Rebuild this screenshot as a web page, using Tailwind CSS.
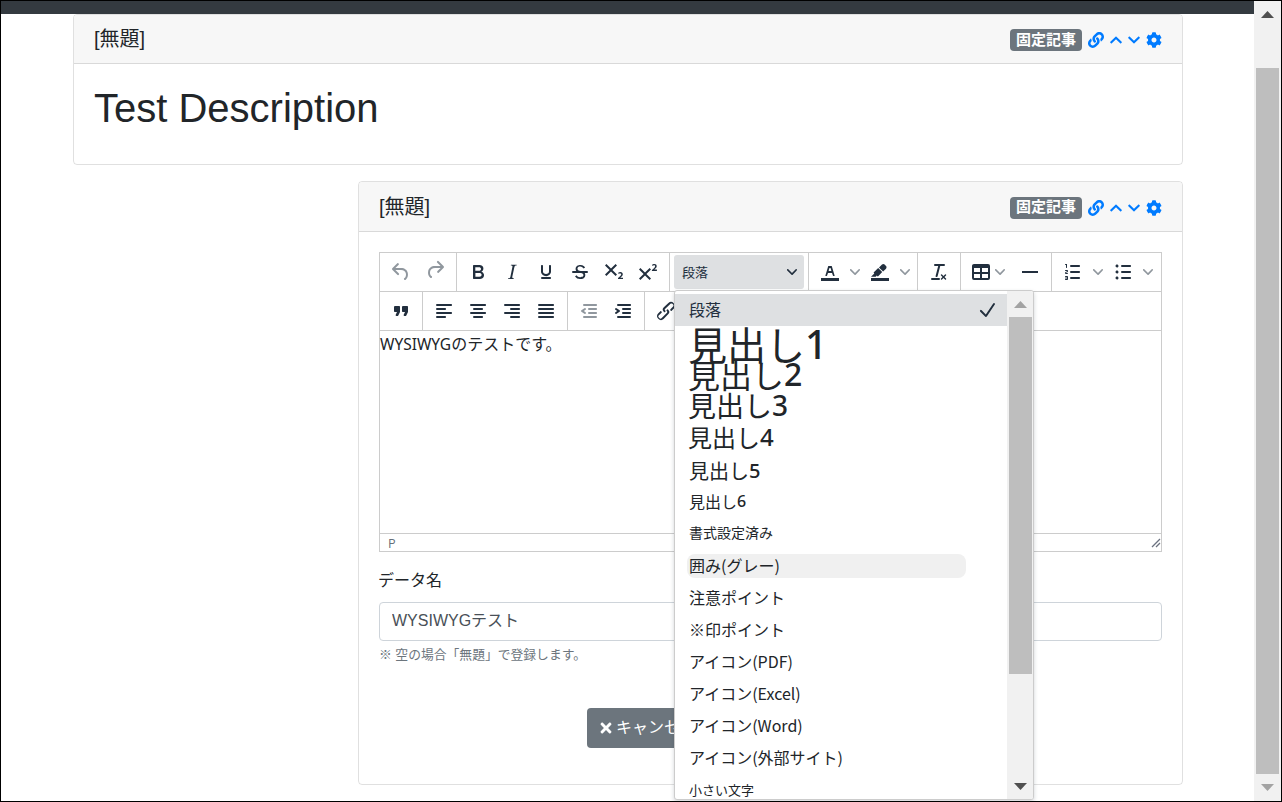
<!DOCTYPE html>
<html lang="ja">
<head>
<meta charset="utf-8">
<title>WYSIWYG</title>
<script src="https://cdn.jsdelivr.net/npm/@tailwindcss/browser@4"></script>
</head>
<body class="bg-white">
<div class="w-[1282px] h-[802px] border border-black overflow-hidden flex bg-white text-[#212529] font-['Liberation_Sans','Noto_Sans_CJK_JP',sans-serif]">
  <div class="flex-1 min-w-0">
    <div class="h-[13px] bg-[#343a40]"></div>

    <section class="ml-[72px] w-[1110px] h-[151px] border border-black/12 rounded-[4px] overflow-hidden mb-[16px]">
      <header class="h-[49px] bg-[#f7f7f7] border-b border-black/12 px-[20px] flex items-center justify-between">
        <span class="text-[20px] leading-[24px]">[無題]</span>
        <div class="flex items-center gap-[6px] text-[#007bff] mt-[2px]">
          <span class="h-[22px] w-[72px] rounded-[4px] bg-[#6c757d] text-white text-[15px] font-bold flex items-center justify-center">固定記事</span>
          <svg class="w-[16px] h-[16px] fill-current" viewBox="0 0 512 512"><path d="M326.612 185.391c59.747 59.809 58.927 155.698.36 214.59-.11.12-.24.25-.36.37l-67.2 67.2c-59.27 59.27-155.699 59.262-214.96 0-59.27-59.26-59.27-155.7 0-214.96l37.106-37.106c9.84-9.84 26.786-3.3 27.294 10.606.648 17.722 3.826 35.527 9.69 52.721 1.986 5.822.567 12.262-3.783 16.612l-13.087 13.087c-28.026 28.026-28.905 73.66-1.155 101.96 28.024 28.579 74.086 28.749 102.325.51l67.2-67.19c28.191-28.191 28.073-73.757 0-101.83-3.701-3.694-7.429-6.564-10.341-8.569a16.037 16.037 0 0 1-6.947-12.606c-.396-10.567 3.348-21.456 11.698-29.806l21.054-21.055c5.521-5.521 14.182-6.199 20.584-1.731a152.482 152.482 0 0 1 20.522 17.197zM467.547 44.449c-59.261-59.262-155.69-59.27-214.96 0l-67.2 67.2c-.12.12-.25.25-.36.37-58.566 58.892-59.387 154.781.36 214.59a152.454 152.454 0 0 0 20.521 17.196c6.402 4.468 15.064 3.789 20.584-1.731l21.054-21.055c8.35-8.35 12.094-19.239 11.698-29.806a16.037 16.037 0 0 0-6.947-12.606c-2.912-2.005-6.64-4.875-10.341-8.569-28.073-28.073-28.191-73.639 0-101.83l67.2-67.19c28.239-28.239 74.3-28.069 102.325.51 27.75 28.3 26.872 73.934-1.155 101.96l-13.087 13.087c-4.35 4.35-5.769 10.79-3.783 16.612 5.864 17.194 9.042 34.999 9.69 52.721.509 13.906 17.454 20.446 27.294 10.606l37.106-37.106c59.271-59.259 59.271-155.699.001-214.959z"/></svg>
          <svg class="w-[12px] h-[16px] fill-current" viewBox="0 0 448 512"><path d="M240.971 130.524l194.343 194.343c9.373 9.373 9.373 24.569 0 33.941l-22.667 22.667c-9.357 9.357-24.522 9.375-33.901.04L224 227.495 69.255 381.516c-9.379 9.335-24.544 9.317-33.901-.04l-22.667-22.667c-9.373-9.373-9.373-24.569 0-33.941L207.03 130.525c9.372-9.373 24.568-9.373 33.941-.001z"/></svg>
          <svg class="w-[12px] h-[16px] fill-current" viewBox="0 0 448 512"><path d="M207.029 381.476L12.686 187.132c-9.373-9.373-9.373-24.569 0-33.941l22.667-22.667c9.357-9.357 24.522-9.375 33.901-.04L224 284.505l154.745-154.021c9.379-9.335 24.544-9.317 33.901.04l22.667 22.667c9.373 9.373 9.373 24.569 0 33.941L240.971 381.476c-9.373 9.372-24.569 9.372-33.942 0z"/></svg>
          <svg class="w-[16px] h-[16px] fill-current" viewBox="0 0 512 512"><path d="M487.4 315.7l-42.6-24.6c4.3-23.2 4.3-47 0-70.2l42.6-24.6c4.9-2.8 7.1-8.6 5.5-14-11.1-35.6-30-67.8-54.7-94.6-3.8-4.1-10-5.1-14.8-2.3L380.8 110c-17.9-15.4-38.5-27.3-60.8-35.1V25.8c0-5.6-3.9-10.5-9.4-11.7-36.7-8.2-74.3-7.8-109.2 0-5.5 1.2-9.4 6.1-9.4 11.7V75c-22.2 7.9-42.8 19.8-60.8 35.1L88.7 85.5c-4.9-2.8-11-1.9-14.8 2.3-24.7 26.7-43.6 58.9-54.7 94.6-1.7 5.4.6 11.2 5.5 14L67.3 221c-4.3 23.2-4.3 47 0 70.2l-42.6 24.6c-4.9 2.8-7.1 8.6-5.5 14 11.1 35.6 30 67.8 54.7 94.6 3.8 4.1 10 5.1 14.8 2.3l42.6-24.6c17.9 15.4 38.5 27.3 60.8 35.1v49.2c0 5.6 3.9 10.5 9.4 11.7 36.7 8.2 74.3 7.8 109.2 0 5.5-1.2 9.4-6.1 9.4-11.7v-49.2c22.2-7.9 42.8-19.8 60.8-35.1l42.6 24.6c4.9 2.8 11 1.9 14.8-2.3 24.7-26.7 43.6-58.9 54.7-94.6 1.5-5.5-.7-11.3-5.6-14.1zM256 336c-44.1 0-80-35.9-80-80s35.9-80 80-80 80 35.9 80 80-35.9 80-80 80z"/></svg>
        </div>
      </header>
      <div class="px-[20px] pt-[20px]"><h1 class="text-[40px] leading-[48px] font-normal">Test Description</h1></div>
    </section>

    <section class="ml-[357px] w-[825px] h-[604px] border border-black/12 rounded-[4px]">
      <header class="h-[50px] bg-[#f7f7f7] border-b border-black/12 rounded-t-[4px] px-[20px] flex items-center justify-between">
        <span class="text-[20px] leading-[24px]">[無題]</span>
        <div class="flex items-center gap-[6px] text-[#007bff] mt-[2px]">
          <span class="h-[22px] w-[72px] rounded-[4px] bg-[#6c757d] text-white text-[15px] font-bold flex items-center justify-center">固定記事</span>
          <svg class="w-[16px] h-[16px] fill-current" viewBox="0 0 512 512"><path d="M326.612 185.391c59.747 59.809 58.927 155.698.36 214.59-.11.12-.24.25-.36.37l-67.2 67.2c-59.27 59.27-155.699 59.262-214.96 0-59.27-59.26-59.27-155.7 0-214.96l37.106-37.106c9.84-9.84 26.786-3.3 27.294 10.606.648 17.722 3.826 35.527 9.69 52.721 1.986 5.822.567 12.262-3.783 16.612l-13.087 13.087c-28.026 28.026-28.905 73.66-1.155 101.96 28.024 28.579 74.086 28.749 102.325.51l67.2-67.19c28.191-28.191 28.073-73.757 0-101.83-3.701-3.694-7.429-6.564-10.341-8.569a16.037 16.037 0 0 1-6.947-12.606c-.396-10.567 3.348-21.456 11.698-29.806l21.054-21.055c5.521-5.521 14.182-6.199 20.584-1.731a152.482 152.482 0 0 1 20.522 17.197zM467.547 44.449c-59.261-59.262-155.69-59.27-214.96 0l-67.2 67.2c-.12.12-.25.25-.36.37-58.566 58.892-59.387 154.781.36 214.59a152.454 152.454 0 0 0 20.521 17.196c6.402 4.468 15.064 3.789 20.584-1.731l21.054-21.055c8.35-8.35 12.094-19.239 11.698-29.806a16.037 16.037 0 0 0-6.947-12.606c-2.912-2.005-6.64-4.875-10.341-8.569-28.073-28.073-28.191-73.639 0-101.83l67.2-67.19c28.239-28.239 74.3-28.069 102.325.51 27.75 28.3 26.872 73.934-1.155 101.96l-13.087 13.087c-4.35 4.35-5.769 10.79-3.783 16.612 5.864 17.194 9.042 34.999 9.69 52.721.509 13.906 17.454 20.446 27.294 10.606l37.106-37.106c59.271-59.259 59.271-155.699.001-214.959z"/></svg>
          <svg class="w-[12px] h-[16px] fill-current" viewBox="0 0 448 512"><path d="M240.971 130.524l194.343 194.343c9.373 9.373 9.373 24.569 0 33.941l-22.667 22.667c-9.357 9.357-24.522 9.375-33.901.04L224 227.495 69.255 381.516c-9.379 9.335-24.544 9.317-33.901-.04l-22.667-22.667c-9.373-9.373-9.373-24.569 0-33.941L207.03 130.525c9.372-9.373 24.568-9.373 33.941-.001z"/></svg>
          <svg class="w-[12px] h-[16px] fill-current" viewBox="0 0 448 512"><path d="M207.029 381.476L12.686 187.132c-9.373-9.373-9.373-24.569 0-33.941l22.667-22.667c9.357-9.357 24.522-9.375 33.901-.04L224 284.505l154.745-154.021c9.379-9.335 24.544-9.317 33.901.04l22.667 22.667c9.373 9.373 9.373 24.569 0 33.941L240.971 381.476c-9.373 9.372-24.569 9.372-33.942 0z"/></svg>
          <svg class="w-[16px] h-[16px] fill-current" viewBox="0 0 512 512"><path d="M487.4 315.7l-42.6-24.6c4.3-23.2 4.3-47 0-70.2l42.6-24.6c4.9-2.8 7.1-8.6 5.5-14-11.1-35.6-30-67.8-54.7-94.6-3.8-4.1-10-5.1-14.8-2.3L380.8 110c-17.9-15.4-38.5-27.3-60.8-35.1V25.8c0-5.6-3.9-10.5-9.4-11.7-36.7-8.2-74.3-7.8-109.2 0-5.5 1.2-9.4 6.1-9.4 11.7V75c-22.2 7.9-42.8 19.8-60.8 35.1L88.7 85.5c-4.9-2.8-11-1.9-14.8 2.3-24.7 26.7-43.6 58.9-54.7 94.6-1.7 5.4.6 11.2 5.5 14L67.3 221c-4.3 23.2-4.3 47 0 70.2l-42.6 24.6c-4.9 2.8-7.1 8.6-5.5 14 11.1 35.6 30 67.8 54.7 94.6 3.8 4.1 10 5.1 14.8 2.3l42.6-24.6c17.9 15.4 38.5 27.3 60.8 35.1v49.2c0 5.6 3.9 10.5 9.4 11.7 36.7 8.2 74.3 7.8 109.2 0 5.5-1.2 9.4-6.1 9.4-11.7v-49.2c22.2-7.9 42.8-19.8 60.8-35.1l42.6 24.6c4.9 2.8 11 1.9 14.8-2.3 24.7-26.7 43.6-58.9 54.7-94.6 1.5-5.5-.7-11.3-5.6-14.1zM256 336c-44.1 0-80-35.9-80-80s35.9-80 80-80 80 35.9 80 80-35.9 80-80 80z"/></svg>
        </div>
      </header>

      <div class="px-[20px] pt-[20px]">
        <div class="relative h-[300px] border border-[#ccc] flex flex-col">
          <!-- row 1 -->
          <div class="h-[39px] border-b border-[#ccc] flex shrink-0 text-[#222f3e]">
            <div class="flex items-center px-[4px] border-r border-[#ccc]">
              <span class="w-[34px] h-[34px] flex items-center justify-center"><svg class="w-[24px] h-[24px] fill-[#222f3e]/50" viewBox="0 0 24 24"><path d="M6.4 8H12c3.7 0 6.2 2 6.8 5.1.6 2.7-.4 5.6-2.3 6.8a1 1 0 0 1-1-1.8c1.1-.6 1.8-2.7 1.4-4.6-.5-2.1-2.1-3.5-4.9-3.5H6.4l3.3 3.3a1 1 0 1 1-1.4 1.4l-5-5a1 1 0 0 1 0-1.4l5-5a1 1 0 0 1 1.4 1.4L6.4 8z"/></svg></span>
              <span class="w-[34px] h-[34px] flex items-center justify-center"><svg class="w-[24px] h-[24px] fill-[#222f3e]/50" viewBox="0 0 24 24"><path d="M17.6 10H12c-2.8 0-4.4 1.4-4.9 3.5-.4 2 .3 4 1.4 4.6a1 1 0 1 1-1 1.8c-2-1.2-2.9-4.1-2.3-6.8.6-3 3-5.1 6.8-5.1h5.6l-3.3-3.3a1 1 0 1 1 1.4-1.4l5 5a1 1 0 0 1 0 1.4l-5 5a1 1 0 0 1-1.4-1.4l3.3-3.3z" transform="translate(0 -2)"/></svg></span>
            </div>
            <div class="flex items-center px-[4px] border-r border-[#ccc]">
              <span class="w-[34px] h-[34px] flex items-center justify-center"><svg class="w-[24px] h-[24px] fill-[#222f3e]" viewBox="0 0 24 24"><path d="M7.8 19c-.3 0-.5 0-.6-.2l-.2-.5V5.7c0-.2 0-.4.2-.5l.6-.2h5c1.5 0 2.7.3 3.5 1 .7.6 1.1 1.4 1.1 2.5a3 3 0 0 1-.6 1.9c-.4.6-1 1-1.6 1.2.4.1.9.3 1.3.6s.8.7 1 1.2c.4.4.5 1 .5 1.6 0 1.3-.4 2.3-1.3 3-.8.7-2.1 1-3.8 1H7.8zm5-8.3c.6 0 1.2-.1 1.6-.5.4-.3.6-.7.6-1.3 0-1.1-.8-1.7-2.3-1.7H9.3v3.5h3.4zm.5 6c.7 0 1.3-.1 1.7-.4.4-.4.6-.9.6-1.5s-.2-1-.7-1.4c-.4-.3-1-.4-2-.4H9.4v3.8h4z"/></svg></span>
              <span class="w-[34px] h-[34px] flex items-center justify-center"><svg class="w-[24px] h-[24px] fill-[#222f3e]" viewBox="0 0 24 24"><path d="M16.7 4.7l-.1.9h-.3c-.6 0-1 0-1.4.3-.3.3-.4.6-.5 1.1l-2.1 9.8v.6c0 .5.4.8 1.4.8h.2l-.2.8H8l.2-.8h.2c1.1 0 1.8-.5 2-1.5l2-9.8.1-.5c0-.6-.4-.8-1.4-.8h-.3l.2-.9h5.8z"/></svg></span>
              <span class="w-[34px] h-[34px] flex items-center justify-center"><svg class="w-[24px] h-[24px] fill-[#222f3e]" viewBox="0 0 24 24"><path d="M16 5c.6 0 1 .4 1 1v5.5a4 4 0 0 1-.4 1.8l-1 1.4a5.3 5.3 0 0 1-5.5 1 5 5 0 0 1-1.6-1c-.5-.4-.8-.9-1.1-1.4a4 4 0 0 1-.4-1.8V6c0-.6.4-1 1-1s1 .4 1 1v5.5c0 .3 0 .6.2 1l.6.7a3.3 3.3 0 0 0 2.2.8 3.4 3.4 0 0 0 2.2-.8c.3-.2.4-.5.6-.8l.2-.9V6c0-.6.4-1 1-1zM8 17h8c.6 0 1 .4 1 1s-.4 1-1 1H8a1 1 0 0 1 0-2z"/></svg></span>
              <span class="w-[34px] h-[34px] flex items-center justify-center"><svg class="w-[24px] h-[24px] fill-[#222f3e]" viewBox="0 0 24 24"><path d="M15.6 8.5c-.5-.7-1-1.1-1.3-1.3-.6-.4-1.3-.6-2-.6-2.7 0-2.8 1.7-2.8 2.1 0 1.6 1.8 2 3.2 2.3 4.4.9 4.6 2.8 4.6 3.9 0 1.4-.7 4.1-5 4.1A6.2 6.2 0 0 1 7 16.4l1.5-1.1c.4.6 1.6 2 3.7 2 1.6 0 2.5-.4 3-1.2.4-.8.3-2-.8-2.6-.7-.4-1.6-.7-2.9-1-1-.2-3.9-.8-3.9-3.6C7.6 6 10.3 5 12.4 5c2.9 0 4.2 1.6 4.7 2.4l-1.5 1.1z"/><path d="M5 11h14a1 1 0 0 1 0 2H5a1 1 0 0 1 0-2z"/></svg></span>
              <span class="w-[34px] h-[34px] flex items-center justify-center"><svg class="w-[24px] h-[24px] fill-[#222f3e]" viewBox="0 0 24 24"><path d="M10.4 10l4.6 4.6-1.4 1.4L9 11.4 4.4 16 3 14.6 7.6 10 3 5.4 4.4 4 9 8.6 13.6 4 15 5.4 10.4 10zM21 19h-5v-1l1-.8 1.7-1.6c.3-.4.5-.8.5-1.2 0-.3 0-.6-.2-.7-.2-.2-.5-.3-.9-.3a2 2 0 0 0-.8.2l-.7.3-.4-1.1 1-.6 1.2-.2c.8 0 1.4.3 1.8.7.4.4.6.9.6 1.5s-.2 1.1-.5 1.6a8 8 0 0 1-1.3 1.3l-.6.6h2.6V19z"/></svg></span>
              <span class="w-[34px] h-[34px] flex items-center justify-center"><svg class="w-[24px] h-[24px] fill-[#222f3e]" viewBox="0 0 24 24"><path d="M15 9.4L10.4 14l4.6 4.6-1.4 1.4L9 15.4 4.4 20 3 18.6 7.6 14 3 9.4 4.4 8 9 12.6 13.6 8 15 9.4zm5.9 1.6h-5v-1l1-.8 1.7-1.6c.3-.5.5-.9.5-1.3 0-.3 0-.5-.2-.7-.2-.2-.5-.3-.9-.3l-.8.2-.7.4-.4-1.2c.2-.2.5-.4 1-.5.3-.2.8-.2 1.2-.2.8 0 1.4.2 1.8.6.4.4.6 1 .6 1.6 0 .5-.2 1-.5 1.5l-1.3 1.4-.6.5h2.6V11z"/></svg></span>
            </div>
            <div class="flex items-center px-[4px] border-r border-[#ccc]">
              <span class="w-[130px] h-[34px] rounded-[3px] bg-[#dee0e2] flex items-center justify-between pl-[8px] pr-[7px] text-[13px] font-['Noto_Sans_CJK_JP',sans-serif]">段落<svg class="w-[10px] h-[10px] fill-[#222f3e]" viewBox="0 0 10 10"><path d="M8.7 2.2c.3-.3.8-.3 1 0 .4.4.4.9 0 1.2L5.7 7.8c-.3.3-.9.3-1.2 0L.2 3.4a.8.8 0 0 1 0-1.2c.3-.3.8-.3 1.1 0L5 6l3.7-3.8z"/></svg></span>
            </div>
            <div class="flex items-center px-[4px] border-r border-[#ccc]">
              <span class="w-[34px] h-[34px] flex items-center justify-center"><svg class="w-[24px] h-[24px] fill-[#222f3e]" viewBox="0 0 24 24"><path d="M3 18h18v3H3z"/><path d="M8.7 16h-.8a.5.5 0 0 1-.5-.6l2.7-9c.1-.3.3-.4.5-.4h2.8c.2 0 .4.1.5.4l2.7 9a.5.5 0 0 1-.5.6h-.8a.5.5 0 0 1-.4-.4l-.7-2.2c0-.2-.3-.4-.5-.4h-3.4c-.2 0-.4.2-.5.4l-.7 2.2c0 .2-.3.4-.4.4zm2.6-7.6l-.6 2a.5.5 0 0 0 .5.6h1.6a.5.5 0 0 0 .5-.6l-.6-2c0-.3-.3-.4-.5-.4h-.4c-.2 0-.4.1-.5.4z"/></svg></span>
              <span class="w-[16px] h-[34px] flex items-center justify-center"><svg class="w-[10px] h-[10px] fill-[#222f3e]/50" viewBox="0 0 10 10"><path d="M8.7 2.2c.3-.3.8-.3 1 0 .4.4.4.9 0 1.2L5.7 7.8c-.3.3-.9.3-1.2 0L.2 3.4a.8.8 0 0 1 0-1.2c.3-.3.8-.3 1.1 0L5 6l3.7-3.8z"/></svg></span>
              <span class="w-[34px] h-[34px] flex items-center justify-center"><svg class="w-[24px] h-[24px] fill-[#222f3e]" viewBox="0 0 24 24"><path d="M3 18h18v3H3z"/><path d="M7.7 16.7H3l3.3-3.3-.7-.8L10.2 8l4 4.1-4 4.2c-.2.2-.6.2-.8 0l-.6-.7-1.1 1.1zm5-7.5L11 7.4l3-2.9a2 2 0 0 1 2.6 0L18 6c.7.7.7 2 0 2.7l-2.9 2.9-1.8-1.8-.5-.6"/></svg></span>
              <span class="w-[16px] h-[34px] flex items-center justify-center"><svg class="w-[10px] h-[10px] fill-[#222f3e]/50" viewBox="0 0 10 10"><path d="M8.7 2.2c.3-.3.8-.3 1 0 .4.4.4.9 0 1.2L5.7 7.8c-.3.3-.9.3-1.2 0L.2 3.4a.8.8 0 0 1 0-1.2c.3-.3.8-.3 1.1 0L5 6l3.7-3.8z"/></svg></span>
            </div>
            <div class="flex items-center px-[4px] border-r border-[#ccc]">
              <span class="w-[34px] h-[34px] flex items-center justify-center"><svg class="w-[24px] h-[24px] fill-[#222f3e]" viewBox="0 0 24 24"><path d="M13.2 6a1 1 0 0 1 0 .2l-2.6 10a1 1 0 0 1-1 .8h-.2a.8.8 0 0 1-.8-1l2.6-10H8a1 1 0 1 1 0-2h9a1 1 0 0 1 0 2h-3.8zM5 18h7a1 1 0 0 1 0 2H5a1 1 0 0 1 0-2zm13 1.5L16.5 18 15 19.5a.7.7 0 0 1-1-1l1.5-1.5-1.5-1.5a.7.7 0 0 1 1-1l1.5 1.5 1.5-1.5a.7.7 0 0 1 1 1L17.5 17l1.5 1.5a.7.7 0 0 1-1 1z"/></svg></span>
            </div>
            <div class="flex items-center px-[4px] border-r border-[#ccc]">
              <span class="w-[48px] h-[34px] flex items-center pl-[4px]"><svg class="w-[24px] h-[24px] fill-[#222f3e]" viewBox="0 0 24 24"><path d="M19 4a2 2 0 0 1 2 2v12a2 2 0 0 1-2 2H5a2 2 0 0 1-2-2V6c0-1.1.9-2 2-2h14zM5 14v4h6v-4H5zm14 0h-6v4h6v-4zm0-6h-6v4h6V8zM5 12h6V8H5v4z"/></svg><svg class="w-[10px] h-[10px] ml-[2px] fill-[#222f3e]/50" viewBox="0 0 10 10"><path d="M8.7 2.2c.3-.3.8-.3 1 0 .4.4.4.9 0 1.2L5.7 7.8c-.3.3-.9.3-1.2 0L.2 3.4a.8.8 0 0 1 0-1.2c.3-.3.8-.3 1.1 0L5 6l3.7-3.8z"/></svg></span>
              <span class="w-[34px] h-[34px] flex items-center justify-center"><svg class="w-[24px] h-[24px] fill-[#222f3e]" viewBox="0 0 24 24"><path d="M4 11h16v2H4z"/></svg></span>
            </div>
            <div class="flex items-center px-[4px]">
              <span class="w-[34px] h-[34px] flex items-center justify-center"><svg class="w-[24px] h-[24px] fill-[#222f3e]" viewBox="0 0 24 24"><path d="M10 17h8c.6 0 1 .4 1 1s-.4 1-1 1h-8a1 1 0 0 1 0-2zm0-6h8c.6 0 1 .4 1 1s-.4 1-1 1h-8a1 1 0 0 1 0-2zm0-6h8c.6 0 1 .4 1 1s-.4 1-1 1h-8a1 1 0 1 1 0-2zM6 4v3.5c0 .3-.2.5-.5.5a.5.5 0 0 1-.5-.5V5h-.5a.5.5 0 0 1 0-1H6zm-1 8.8l.2.2h1.3c.3 0 .5.2.5.5s-.2.5-.5.5H4.9a1 1 0 0 1-.9-1V13c0-.4.3-.8.6-1l1.2-.4.2-.3a.2.2 0 0 0-.2-.2H4.5a.5.5 0 0 1-.5-.5c0-.3.2-.5.5-.5h1.6c.5 0 .9.4.9 1v.1c0 .4-.3.8-.6 1l-1.2.4-.2.3zM7 17v2c0 .6-.4 1-1 1H4.5a.5.5 0 0 1 0-1h1.2c.2 0 .3-.1.3-.3 0-.2-.1-.3-.3-.3H4.4a.4.4 0 1 1 0-.8h1.3c.2 0 .3-.1.3-.3 0-.2-.1-.3-.3-.3H4.5a.5.5 0 1 1 0-1H6c.6 0 1 .4 1 1z"/></svg></span>
              <span class="w-[16px] h-[34px] flex items-center justify-center"><svg class="w-[10px] h-[10px] fill-[#222f3e]/50" viewBox="0 0 10 10"><path d="M8.7 2.2c.3-.3.8-.3 1 0 .4.4.4.9 0 1.2L5.7 7.8c-.3.3-.9.3-1.2 0L.2 3.4a.8.8 0 0 1 0-1.2c.3-.3.8-.3 1.1 0L5 6l3.7-3.8z"/></svg></span>
              <span class="w-[34px] h-[34px] flex items-center justify-center"><svg class="w-[24px] h-[24px] fill-[#222f3e]" viewBox="0 0 24 24"><path d="M11 5h8c.6 0 1 .4 1 1s-.4 1-1 1h-8a1 1 0 0 1 0-2zm0 6h8c.6 0 1 .4 1 1s-.4 1-1 1h-8a1 1 0 0 1 0-2zm0 6h8c.6 0 1 .4 1 1s-.4 1-1 1h-8a1 1 0 0 1 0-2zM4.5 6c0-.4.1-.8.4-1 .3-.4.7-.5 1.1-.5.4 0 .8.1 1 .4.4.3.5.7.5 1.1 0 .4-.1.8-.4 1-.3.4-.7.5-1.1.5-.4 0-.8-.1-1-.4-.4-.3-.5-.7-.5-1.1zm0 6c0-.4.1-.8.4-1 .3-.4.7-.5 1.1-.5.4 0 .8.1 1 .4.4.3.5.7.5 1.1 0 .4-.1.8-.4 1-.3.4-.7.5-1.1.5-.4 0-.8-.1-1-.4-.4-.3-.5-.7-.5-1.1zm0 6c0-.4.1-.8.4-1 .3-.4.7-.5 1.1-.5.4 0 .8.1 1 .4.4.3.5.7.5 1.1 0 .4-.1.8-.4 1-.3.4-.7.5-1.1.5-.4 0-.8-.1-1-.4-.4-.3-.5-.7-.5-1.1z"/></svg></span>
              <span class="w-[16px] h-[34px] flex items-center justify-center"><svg class="w-[10px] h-[10px] fill-[#222f3e]/50" viewBox="0 0 10 10"><path d="M8.7 2.2c.3-.3.8-.3 1 0 .4.4.4.9 0 1.2L5.7 7.8c-.3.3-.9.3-1.2 0L.2 3.4a.8.8 0 0 1 0-1.2c.3-.3.8-.3 1.1 0L5 6l3.7-3.8z"/></svg></span>
            </div>
          </div>
          <!-- row 2 -->
          <div class="h-[39px] border-b border-[#ccc] flex shrink-0">
            <div class="flex items-center px-[4px] border-r border-[#ccc]">
              <span class="w-[34px] h-[34px] flex items-center justify-center"><svg class="w-[24px] h-[24px] fill-[#222f3e]" viewBox="0 0 24 24"><path d="M7.5 17h.9c.4 0 .7-.2.9-.6L11 13V8c0-.6-.4-1-1-1H6a1 1 0 0 0-1 1v4c0 .6.4 1 1 1h2l-1.3 2.7a1 1 0 0 0 .8 1.3zm8 0h.9c.4 0 .7-.2.9-.6L19 13V8c0-.6-.4-1-1-1h-4a1 1 0 0 0-1 1v4c0 .6.4 1 1 1h2l-1.3 2.7a1 1 0 0 0 .8 1.3z"/></svg></span>
            </div>
            <div class="flex items-center px-[4px] border-r border-[#ccc]">
              <span class="w-[34px] h-[34px] flex items-center justify-center"><svg class="w-[24px] h-[24px] fill-[#222f3e]" viewBox="0 0 24 24"><path d="M5 5h14c.6 0 1 .4 1 1s-.4 1-1 1H5a1 1 0 1 1 0-2zm0 4h8c.6 0 1 .4 1 1s-.4 1-1 1H5a1 1 0 1 1 0-2zm0 8h8c.6 0 1 .4 1 1s-.4 1-1 1H5a1 1 0 0 1 0-2zm0-4h14c.6 0 1 .4 1 1s-.4 1-1 1H5a1 1 0 0 1 0-2z"/></svg></span>
              <span class="w-[34px] h-[34px] flex items-center justify-center"><svg class="w-[24px] h-[24px] fill-[#222f3e]" viewBox="0 0 24 24"><path d="M5 5h14c.6 0 1 .4 1 1s-.4 1-1 1H5a1 1 0 1 1 0-2zm3 4h8c.6 0 1 .4 1 1s-.4 1-1 1H8a1 1 0 1 1 0-2zm0 8h8c.6 0 1 .4 1 1s-.4 1-1 1H8a1 1 0 0 1 0-2zm-3-4h14c.6 0 1 .4 1 1s-.4 1-1 1H5a1 1 0 0 1 0-2z"/></svg></span>
              <span class="w-[34px] h-[34px] flex items-center justify-center"><svg class="w-[24px] h-[24px] fill-[#222f3e]" viewBox="0 0 24 24"><path d="M5 5h14c.6 0 1 .4 1 1s-.4 1-1 1H5a1 1 0 1 1 0-2zm6 4h8c.6 0 1 .4 1 1s-.4 1-1 1h-8a1 1 0 0 1 0-2zm0 8h8c.6 0 1 .4 1 1s-.4 1-1 1h-8a1 1 0 0 1 0-2zm-6-4h14c.6 0 1 .4 1 1s-.4 1-1 1H5a1 1 0 0 1 0-2z"/></svg></span>
              <span class="w-[34px] h-[34px] flex items-center justify-center"><svg class="w-[24px] h-[24px] fill-[#222f3e]" viewBox="0 0 24 24"><path d="M5 5h14c.6 0 1 .4 1 1s-.4 1-1 1H5a1 1 0 1 1 0-2zm0 4h14c.6 0 1 .4 1 1s-.4 1-1 1H5a1 1 0 1 1 0-2zm0 4h14c.6 0 1 .4 1 1s-.4 1-1 1H5a1 1 0 0 1 0-2zm0 4h14c.6 0 1 .4 1 1s-.4 1-1 1H5a1 1 0 0 1 0-2z"/></svg></span>
            </div>
            <div class="flex items-center px-[4px] border-r border-[#ccc]">
              <span class="w-[34px] h-[34px] flex items-center justify-center"><svg class="w-[24px] h-[24px] fill-[#222f3e]/50" viewBox="0 0 24 24"><path d="M7 5h12c.6 0 1 .4 1 1s-.4 1-1 1H7a1 1 0 1 1 0-2zm5 4h7c.6 0 1 .4 1 1s-.4 1-1 1h-7a1 1 0 0 1 0-2zm0 4h7c.6 0 1 .4 1 1s-.4 1-1 1h-7a1 1 0 0 1 0-2zm-5 4h12a1 1 0 0 1 0 2H7a1 1 0 0 1 0-2zm1.6-3.8a1 1 0 0 1-1.2 1.6l-3-2a1 1 0 0 1 0-1.6l3-2a1 1 0 0 1 1.2 1.6L6.8 12l1.8 1.2z"/></svg></span>
              <span class="w-[34px] h-[34px] flex items-center justify-center"><svg class="w-[24px] h-[24px] fill-[#222f3e]" viewBox="0 0 24 24"><path d="M7 5h12c.6 0 1 .4 1 1s-.4 1-1 1H7a1 1 0 1 1 0-2zm5 4h7c.6 0 1 .4 1 1s-.4 1-1 1h-7a1 1 0 0 1 0-2zm0 4h7c.6 0 1 .4 1 1s-.4 1-1 1h-7a1 1 0 0 1 0-2zm-5 4h12a1 1 0 0 1 0 2H7a1 1 0 0 1 0-2zm-2.6-3.8L6.2 12l-1.8-1.2a1 1 0 0 1 1.2-1.6l3 2a1 1 0 0 1 0 1.6l-3 2a1 1 0 1 1-1.2-1.6z"/></svg></span>
            </div>
            <div class="flex items-center px-[4px]">
              <span class="w-[34px] h-[34px] flex items-center justify-center"><svg class="w-[24px] h-[24px] fill-[#222f3e]" viewBox="0 0 24 24"><path d="M6.2 12.3a1 1 0 0 1 1.4 1.4l-2.1 2a2 2 0 1 0 2.7 2.8l4.8-4.8a1 1 0 0 0 0-1.4 1 1 0 1 1 1.4-1.3 2.9 2.9 0 0 1 0 4L9.6 20a3.9 3.9 0 0 1-5.5-5.5l2-2zm11.6-.6a1 1 0 0 1-1.4-1.4l2-2a2 2 0 1 0-2.6-2.8L11 9.9a1 1 0 0 0 0 1.4 1 1 0 1 1-1.4 1.3 2.9 2.9 0 0 1 0-4L14.4 4a3.9 3.9 0 0 1 5.5 5.5l-2 2z"/></svg></span>
            </div>
          </div>
          <!-- edit area -->
          <div class="flex-1 text-[16px] leading-[24px] pt-[1px] font-['Noto_Sans','Noto_Sans_CJK_JP',sans-serif]"><span class="text-[15.5px]">WYSIWYG</span>のテストです。</div>
          <!-- status -->
          <div class="h-[18px] border-t border-[#ccc] flex items-center justify-between pl-[8px] shrink-0">
            <span class="text-[12px] leading-none text-[#222f3e]/70 font-['Noto_Sans_CJK_JP',sans-serif]">P</span>
            <svg class="w-[10px] h-[10px] stroke-[#6b7280] fill-none" viewBox="0 0 10 10"><path d="M9 1 1 9M9 5 5 9" stroke-width="1.3"/></svg>
          </div>

          <!-- format dropdown -->
          <div class="absolute left-[294px] top-[37px] w-[360px] h-[510px] bg-white border border-[#ccc] rounded-[3px] shadow-[0_2px_4px_rgba(34,47,62,0.2)] flex overflow-hidden z-10 font-['Noto_Sans_CJK_JP',sans-serif] text-[#222f3e]">
            <div class="flex-1 min-w-0 pt-[3px] overflow-hidden text-[#212529]">
              <div class="h-[32px] bg-[#dee0e2] pl-[14px] pr-[8px] pb-[2px] flex items-center justify-between text-[16px] leading-none text-[#222f3e]">段落<svg class="w-[24px] h-[24px] fill-[#222f3e] mt-[2px]" viewBox="0 0 24 24"><path d="M18.2 5.4a1 1 0 0 1 1.6 1.2l-8 12a1 1 0 0 1-1.5.1l-5-5a1 1 0 1 1 1.4-1.4l4.1 4.1 7.4-11z"/></svg></div>
              <div class="h-[34px] pl-[13px] flex items-center text-[39px] leading-none whitespace-nowrap">見出し<span class="font-['Noto_Sans'] font-medium">1</span></div>
              <div class="h-[31px] pl-[13px] pb-[4px] flex items-center text-[32px] leading-none whitespace-nowrap">見出し<span class="font-['Noto_Sans'] font-medium">2</span></div>
              <div class="h-[31px] pl-[13px] pb-[4px] flex items-center text-[28px] leading-none">見出し<span class="font-['Noto_Sans'] font-medium">3</span></div>
              <div class="h-[33px] pl-[13px] pb-[4px] flex items-center text-[24px] leading-none">見出し<span class="font-['Noto_Sans'] font-medium">4</span></div>
              <div class="h-[32px] pl-[14px] flex items-center text-[20px] leading-none">見出し<span class="font-['Noto_Sans'] font-medium">5</span></div>
              <div class="h-[31px] pl-[14px] pb-[4px] flex items-center text-[16px] leading-none">見出し<span class="font-['Noto_Sans'] font-medium">6</span></div>
              <div class="h-[32px] pl-[14px] pb-[4px] flex items-center text-[14px] leading-none">書式設定済み</div>
              <div class="h-[32px] pl-[12px] flex items-center"><div class="w-[279px] h-[24px] rounded-[8px] bg-[#f0f0f0] pl-[2px] pb-[2px] flex items-center text-[16px] leading-none">囲み(グレー)</div></div>
              <div class="h-[32px] pl-[14px] pb-[2px] flex items-center text-[16px] leading-none">注意ポイント</div>
              <div class="h-[32px] pl-[14px] pb-[2px] flex items-center text-[16px] leading-none">※印ポイント</div>
              <div class="h-[32px] pl-[14px] pb-[2px] flex items-center text-[16px] leading-none">アイコン(PDF)</div>
              <div class="h-[32px] pl-[14px] pb-[2px] flex items-center text-[16px] leading-none">アイコン(Excel)</div>
              <div class="h-[32px] pl-[14px] pb-[2px] flex items-center text-[16px] leading-none">アイコン(Word)</div>
              <div class="h-[32px] pl-[14px] pb-[2px] flex items-center text-[16px] leading-none">アイコン(外部サイト)</div>
              <div class="h-[32px] pl-[14px] pb-[2px] flex items-center text-[13px] leading-none">小さい文字</div>
            </div>
            <div class="w-[26px] bg-[#f1f1f1] flex flex-col items-center shrink-0">
              <div class="h-[26px] flex items-center justify-center"><svg class="w-[13px] h-[7px] fill-[#a3a3a3]" viewBox="0 0 13 7"><path d="M6.5 0 13 7H0z"/></svg></div>
              <div class="w-[23px] h-[357px] bg-[#bebebe]"></div>
              <div class="flex-1"></div>
              <div class="h-[26px] flex items-center justify-center"><svg class="w-[13px] h-[7px] fill-[#505050]" viewBox="0 0 13 7"><path d="M0 0h13L6.5 7z"/></svg></div>
            </div>
          </div>
        </div>

        <label class="block mt-[17px] mb-[9px] -ml-[1px] text-[16px] leading-[24px]">データ名</label>
        <input class="block w-full h-[39px] border border-[#ced4da] rounded-[4px] px-[12px] pb-[5px] text-[16px] text-[#495057] bg-white" value="WYSIWYGテスト">
        <p class="mt-[4px] text-[12.8px] leading-[19px] text-[#6c757d]">※ 空の場合「無題」で登録します。</p>

        <div class="mt-[44px] flex justify-center gap-[7px]">
          <button class="w-[180px] h-[40px] rounded-[4px] bg-[#6c757d] text-white text-[16px] flex items-center pl-[12px] gap-[3px]"><svg class="w-[14px] h-[16px] fill-current" viewBox="0 0 352 512"><path d="M242.72 256l100.07-100.07c12.28-12.28 12.28-32.19 0-44.48l-22.24-22.24c-12.28-12.28-32.19-12.28-44.48 0L176 189.28 75.93 89.21c-12.28-12.28-32.19-12.28-44.48 0L9.21 111.45c-12.28 12.28-12.28 32.19 0 44.48L109.28 256 9.21 356.07c-12.28 12.28-12.28 32.19 0 44.48l22.24 22.24c12.28 12.28 32.2 12.28 44.48 0L176 322.72l100.07 100.07c12.28 12.28 32.2 12.28 44.48 0l22.24-22.24c12.28-12.28 12.28-32.19 0-44.48L242.72 256z"/></svg>キャンセル</button>
          <button class="w-[180px] h-[40px] rounded-[4px] bg-[#007bff] text-white text-[16px]">登録</button>
        </div>
      </div>
    </section>
  </div>

  <div class="w-[27px] shrink-0 bg-[#f1f1f1] flex flex-col items-center">
    <div class="h-[27px] flex items-center justify-center"><svg class="w-[13px] h-[7px] fill-[#505050]" viewBox="0 0 13 7"><path d="M6.5 0 13 7H0z"/></svg></div>
    <div class="h-[40px]"></div>
    <div class="w-[23px] h-[706px] bg-[#bebebe]"></div>
    <div class="h-[27px] flex items-center justify-center"><svg class="w-[13px] h-[7px] fill-[#a3a3a3]" viewBox="0 0 13 7"><path d="M0 0h13L6.5 7z"/></svg></div>
  </div>
</div>
</body>
</html>
